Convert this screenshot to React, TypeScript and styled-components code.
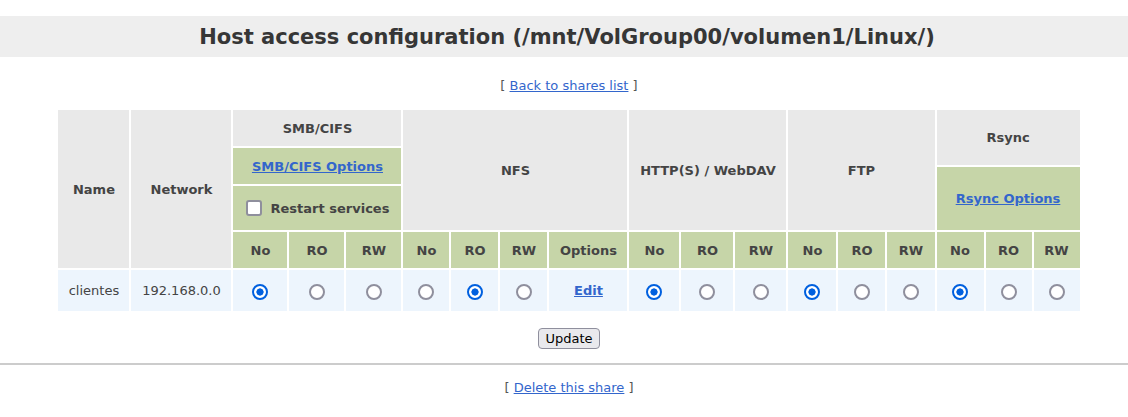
import { useState } from "react";
import styled, { createGlobalStyle } from "styled-components";

const GlobalStyle = createGlobalStyle`
  body {
    margin: 0;
    background: #ffffff;
    font-family: "DejaVu Sans", Verdana, sans-serif;
    color: #444444;
  }
`;

type Access = "No" | "RO" | "RW";

const COLS = [71, 100, 54, 55, 55, 46, 47, 47, 78, 50, 52, 51, 48, 47, 47, 47, 46, 46];

const Page = styled.div`
  padding-top: 16px;
`;

const TitleBar = styled.h1`
  margin: 0;
  height: 41px;
  display: flex;
  align-items: center;
  justify-content: center;
  padding-left: 6px;
  background: #eeeeee;
  color: #363636;
  font-size: 21px;
  font-weight: bold;
`;

const Content = styled.div`
  padding-left: 10px;
  display: flex;
  flex-direction: column;
  align-items: center;
`;

const LinkLine = styled.div<{ $top: number }>`
  margin-top: ${(p) => p.$top}px;
  font-size: 13px;
  line-height: 16px;
  text-align: center;
  color: #555555;
`;

const Link = styled.a<{ $bold?: boolean }>`
  color: #3366cc;
  text-decoration: underline;
  font-weight: ${(p) => (p.$bold ? "bold" : "normal")};
  cursor: pointer;
`;

const Table = styled.table`
  margin-top: 14px;
  border-spacing: 2px;
  table-layout: fixed;
  width: ${COLS.reduce((a, b) => a + b, 0) + (COLS.length + 1) * 2}px;
  font-size: 13px;
`;

const HeadCell = styled.th<{ $tone?: "gray" | "green" | "none"; $h?: number }>`
  padding: 0;
  height: ${(p) => (p.$h ? `${p.$h}px` : "auto")};
  background: ${(p) =>
    p.$tone === "green" ? "#c6d5a8" : p.$tone === "none" ? "transparent" : "#e9e9e9"};
  color: #444444;
  font-weight: bold;
  text-align: center;
  vertical-align: middle;
`;

const Stack = styled.div`
  display: flex;
  flex-direction: column;
  gap: 2px;
  height: 120px;
`;

const Block = styled.div<{ $tone: "gray" | "green"; $h: number }>`
  height: ${(p) => p.$h}px;
  display: flex;
  align-items: center;
  justify-content: center;
  background: ${(p) => (p.$tone === "green" ? "#c6d5a8" : "#e9e9e9")};
`;

const CheckLabel = styled.label`
  display: flex;
  align-items: center;
  gap: 9px;
  cursor: pointer;
`;

const Check = styled.input`
  appearance: none;
  margin: 0;
  width: 16px;
  height: 16px;
  border: 2px solid #8f8f9d;
  border-radius: 3px;
  background: #ffffff;
  &:checked {
    background: #0060df;
    border-color: #0060df;
  }
`;

const DataCell = styled.td`
  padding: 0;
  height: 41px;
  background: #edf5fd;
  text-align: center;
  vertical-align: middle;
  color: #444444;
`;

const Radio = styled.input`
  appearance: none;
  margin: 2px 0 0;
  width: 16px;
  height: 16px;
  border: 2px solid #8f8f9d;
  border-radius: 50%;
  background: #ffffff;
  vertical-align: middle;
  &:checked {
    border-color: #0060df;
    background: radial-gradient(circle, #0060df 0 3.3px, #ffffff 3.9px);
  }
`;

const UpdateButton = styled.button`
  margin-top: 15px;
  height: 21px;
  padding: 0 6px;
  font-family: "DejaVu Sans", Verdana, sans-serif;
  font-size: 13px;
  color: #000000;
  background: #e9e9ed;
  border: 1px solid #8f8f9d;
  border-radius: 4px;
`;

const Rule = styled.hr`
  margin: 14px 0 0;
  border: none;
  height: 2px;
  background: #cccccc;
`;

const SERVICES = ["smb", "nfs", "http", "ftp", "rsync"] as const;
type Service = (typeof SERVICES)[number];

const App = () => {
  const [access, setAccess] = useState<Record<Service, Access>>({
    smb: "No",
    nfs: "RO",
    http: "No",
    ftp: "No",
    rsync: "No",
  });
  const [restart, setRestart] = useState(false);

  const radios = (s: Service) =>
    (["No", "RO", "RW"] as Access[]).map((a) => (
      <DataCell key={s + a}>
        <Radio
          type="radio"
          name={s}
          checked={access[s] === a}
          onChange={() => setAccess({ ...access, [s]: a })}
        />
      </DataCell>
    ));

  const subHeads = (s: string) =>
    ["No", "RO", "RW"].map((a) => (
      <HeadCell key={s + a} $tone="green" $h={36}>
        {a}
      </HeadCell>
    ));

  return (
    <Page>
      <GlobalStyle />
      <TitleBar>Host access configuration (/mnt/VolGroup00/volumen1/Linux/)</TitleBar>
      <Content>
        <LinkLine $top={21}>
          [ <Link>Back to shares list</Link> ]
        </LinkLine>
        <Table>
          <colgroup>
            {COLS.map((w, i) => (
              <col key={i} style={{ width: w }} />
            ))}
          </colgroup>
          <thead>
            <tr>
              <HeadCell rowSpan={2}>Name</HeadCell>
              <HeadCell rowSpan={2}>Network</HeadCell>
              <HeadCell colSpan={3} $tone="none" $h={120}>
                <Stack>
                  <Block $tone="gray" $h={36}>SMB/CIFS</Block>
                  <Block $tone="green" $h={36}>
                    <Link $bold>SMB/CIFS Options</Link>
                  </Block>
                  <Block $tone="green" $h={44}>
                    <CheckLabel>
                      <Check
                        type="checkbox"
                        checked={restart}
                        onChange={() => setRestart(!restart)}
                      />
                      Restart services
                    </CheckLabel>
                  </Block>
                </Stack>
              </HeadCell>
              <HeadCell colSpan={4}>NFS</HeadCell>
              <HeadCell colSpan={3}>HTTP(S) / WebDAV</HeadCell>
              <HeadCell colSpan={3}>FTP</HeadCell>
              <HeadCell colSpan={3} $tone="none">
                <Stack>
                  <Block $tone="gray" $h={55}>Rsync</Block>
                  <Block $tone="green" $h={63}>
                    <Link $bold>Rsync Options</Link>
                  </Block>
                </Stack>
              </HeadCell>
            </tr>
            <tr>
              {subHeads("smb")}
              {subHeads("nfs")}
              <HeadCell $tone="green">Options</HeadCell>
              {subHeads("http")}
              {subHeads("ftp")}
              {subHeads("rsync")}
            </tr>
          </thead>
          <tbody>
            <tr>
              <DataCell>clientes</DataCell>
              <DataCell>192.168.0.0</DataCell>
              {radios("smb")}
              {radios("nfs")}
              <DataCell>
                <Link $bold>Edit</Link>
              </DataCell>
              {radios("http")}
              {radios("ftp")}
              {radios("rsync")}
            </tr>
          </tbody>
        </Table>
        <UpdateButton>Update</UpdateButton>
      </Content>
      <Rule />
      <Content>
        <LinkLine $top={15}>
          [ <Link>Delete this share</Link> ]
        </LinkLine>
      </Content>
    </Page>
  );
};

export default App;
